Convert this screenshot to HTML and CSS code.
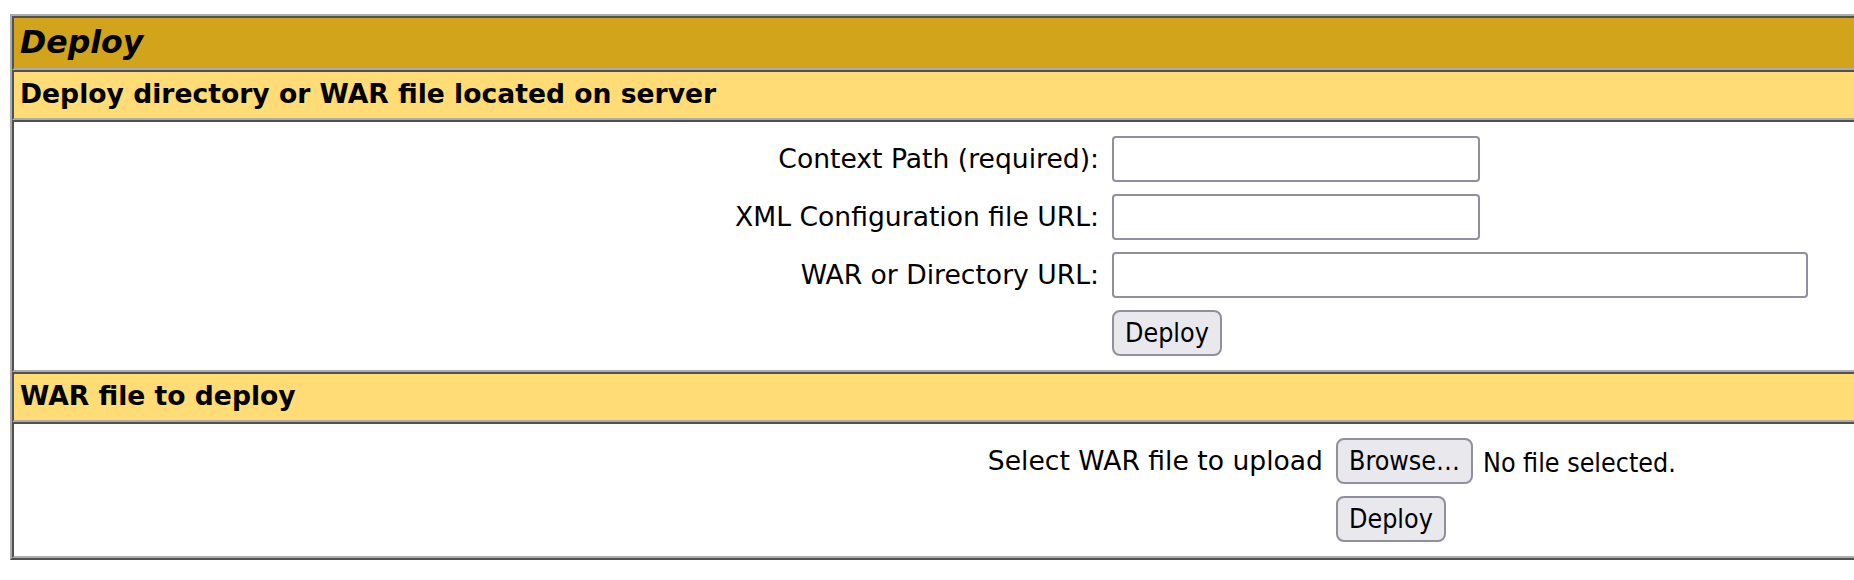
FILE: index.html
```html
<!DOCTYPE html>
<html>
<head>
<meta charset="utf-8">
<title>Deploy</title>
<link rel="stylesheet" href="styles.css">
</head>
<body>
<div class="panel">
  <div class="cell title">Deploy</div>
  <div class="cell header">Deploy directory or WAR file located on server</div>
  <div class="cell body">
    <form class="form form-server">
      <label class="lbl">Context Path (required):</label>
      <input class="txt txt-short" type="text">
      <label class="lbl">XML Configuration file URL:</label>
      <input class="txt txt-short" type="text">
      <label class="lbl">WAR or Directory URL:</label>
      <input class="txt txt-long" type="text">
      <span class="lbl"></span>
      <div class="ctl"><button type="button" class="btn">Deploy</button></div>
    </form>
  </div>
  <div class="cell header">WAR file to deploy</div>
  <div class="cell body">
    <form class="form form-upload">
      <label class="lbl">Select WAR file to upload</label>
      <div class="ctl file"><button type="button" class="btn">Browse…</button><span class="nofile">No file selected.</span></div>
      <span class="lbl"></span>
      <div class="ctl"><button type="button" class="btn">Deploy</button></div>
    </form>
  </div>
</div>
</body>
</html>
```

FILE: styles.css
```css
html, body {
  margin: 0;
  padding: 0;
  background: #ffffff;
  overflow: hidden;
}

body {
  font-family: "DejaVu Sans", Verdana, sans-serif;
  color: #000;
}

.panel {
  margin: 14px 0 0 10px;
  width: 1900px;
  border: 2px solid;
  border-color: #ababab #505050 #505050 #ababab;
  display: flex;
  flex-direction: column;
}

.cell {
  border: 2px solid;
  border-color: #505050 #ababab #ababab #505050;
}

.title {
  background: #d2a41c;
  font-size: 31.6px;
  font-weight: bold;
  font-style: italic;
  height: 54px;
  box-sizing: border-box;
  padding: 6px 6px 0;
  line-height: 37px;
}

.header {
  background: #ffdc75;
  font-size: 26.6px;
  font-weight: bold;
  height: 50px;
  box-sizing: border-box;
  padding: 7px 6px 0;
  line-height: 30px;
}

.body {
  background: #fff;
}

.form {
  margin: 0;
  display: grid;
  column-gap: 13px;
  row-gap: 12px;
  align-items: center;
  padding: 14px 0;
}

.form-server {
  grid-template-columns: 1085px auto;
}

.form-upload {
  grid-template-columns: 1309px auto;
}

.lbl {
  text-align: right;
  font-size: 26.6px;
  padding-bottom: 2px;
  white-space: nowrap;
}

.ctl {
  display: flex;
  align-items: center;
  height: 46px;
}

.txt {
  height: 46px;
  box-sizing: border-box;
  border: 2px solid #8f8f9d;
  border-radius: 4px;
  background: #fff;
  margin: 0;
  padding: 0 6px;
}

.txt-short {
  width: 368px;
}

.txt-long {
  width: 696px;
}

.btn {
  height: 46px;
  box-sizing: border-box;
  border: 2px solid #8f8f9d;
  border-radius: 8px;
  background: #e9e9ed;
  color: #000;
  margin: 0;
  padding: 0 11px;
  font-family: "DejaVu Sans Condensed", "DejaVu Sans", sans-serif;
  font-stretch: condensed;
  font-size: 26.6px;
  line-height: 30px;
}

.nofile {
  margin-left: 10px;
  font-family: "DejaVu Sans Condensed", "DejaVu Sans", sans-serif;
  font-stretch: condensed;
  font-size: 26.6px;
  padding-top: 2px;
}
```
